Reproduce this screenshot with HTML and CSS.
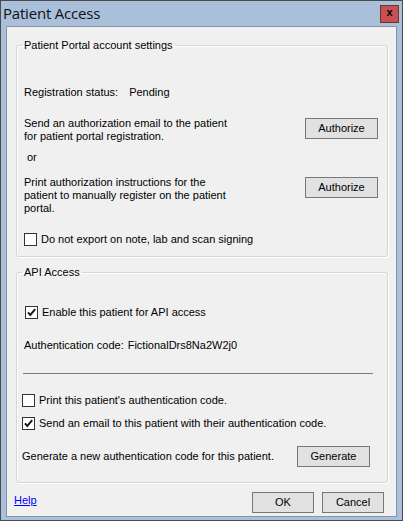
FILE: index.html
```html
<!DOCTYPE html>
<html>
<head>
<meta charset="utf-8">
<link rel="stylesheet" href="styles.css">
</head>
<body>
<div class="window">
  <div class="titlebar">
    <span class="title">Patient Access</span>
    <span class="close">x</span>
  </div>
  <div class="client">
    <fieldset class="group portal">
      <legend>Patient Portal account settings</legend>
      <div class="group-body portal-body">
        <div class="status"><span>Registration status:</span><span class="status-value">Pending</span></div>
        <div class="action-row first">
          <p class="action-text">Send an authorization email to the patient<br>for patient portal registration.</p>
          <button class="btn">Authorize</button>
        </div>
        <div class="or">or</div>
        <div class="action-row second">
          <p class="action-text">Print authorization instructions for the<br>patient to manually register on the patient<br>portal.</p>
          <button class="btn">Authorize</button>
        </div>
        <div class="check export"><span class="box"></span><span>Do not export on note, lab and scan signing</span></div>
      </div>
    </fieldset>
    <fieldset class="group api">
      <legend>API Access</legend>
      <div class="group-body api-body">
        <div class="check enable"><span class="box"><svg viewBox="0 0 11 11" width="11" height="11"><path d="M2 5.3 L4.3 8 L9.2 2.2" fill="none" stroke="#1b1b1b" stroke-width="2"/></svg></span><span>Enable this patient for API access</span></div>
        <div class="auth-code"><span>Authentication code:</span><span class="code-value">FictionalDrs8Na2W2j0</span></div>
        <div class="divider"></div>
        <div class="check print"><span class="box"></span><span>Print this patient's authentication code.</span></div>
        <div class="check email"><span class="box"><svg viewBox="0 0 11 11" width="11" height="11"><path d="M2 5.3 L4.3 8 L9.2 2.2" fill="none" stroke="#1b1b1b" stroke-width="2"/></svg></span><span>Send an email to this patient with their authentication code.</span></div>
        <div class="generate-row">
          <span class="generate-text">Generate a new authentication code for this patient.</span>
          <button class="btn">Generate</button>
        </div>
      </div>
    </fieldset>
    <div class="footer">
      <a class="help" href="#">Help</a>
      <button class="btn small">OK</button>
      <button class="btn small cancel">Cancel</button>
    </div>
  </div>
</div>
</body>
</html>
```
FILE: styles.css
```css
* { box-sizing: border-box; }
html, body { margin: 0; padding: 0; background: #f0f0f0; }
body {
  font-family: "Liberation Sans", Arial, sans-serif;
  font-size: 11px;
  line-height: 13px;
  color: #000;
}
.window {
  width: 403px;
  height: 521px;
  border: 1px solid #4b4b4b;
  background: #a9bfda;
  padding: 0 5px 3px;
  display: flex;
  flex-direction: column;
}
.titlebar {
  height: 25px;
  margin: 0 -5px;
  padding-left: 2px;
  display: flex;
  align-items: flex-start;
}
.title {
  font-family: "Open Sans", "Liberation Sans", sans-serif;
  font-size: 15px;
  line-height: 20px;
  letter-spacing: -0.2px;
  margin-top: 2px;
  color: #111;
}
.close {
  margin-left: auto;
  margin-top: 4px;
  margin-right: 3px;
  width: 19px;
  height: 18px;
  background: #c75050;
  border: 1px solid #6b3434;
  font-weight: bold;
  font-size: 11px;
  line-height: 13px;
  text-align: center;
  color: #000;
}
.client {
  flex: 1;
  background: #f0f0f0;
  border: 1px solid #8594a6;
  padding-top: 12px;
  display: flex;
  flex-direction: column;
}
.group {
  margin: 0 8px 0 9px;
  padding: 0;
  min-width: 0;
  border: 1px solid #d5d5d5;
  border-radius: 3px;
  box-shadow: inset 1px 1px 0 #fff, 1px 1px 0 #fff;
}
.group legend {
  padding: 0 2px;
  margin-left: 5px;
  line-height: 13px;
}
.api { margin-top: 9px; }
.portal-body { padding: 0 9px 10px 7px; }
.api-body { padding: 0 17px 15px 5px; }
.status { margin-top: 34px; display: flex; }
.status-value { margin-left: 11px; }
.action-row {
  display: flex;
  justify-content: space-between;
  align-items: flex-start;
}
.action-row.first { margin-top: 18px; }
.action-row.second { margin-top: 12px; }
.action-text { margin: 0; }
.btn {
  width: 73px;
  height: 21px;
  margin-top: 1px;
  padding: 0;
  border: 1px solid #777;
  background: #e1e1e1;
  font-family: "Liberation Sans", Arial, sans-serif;
  font-size: 11px;
  line-height: 17px;
  color: #000;
}
.or { margin-top: 8px; margin-left: 3px; }
.check { display: flex; align-items: flex-start; gap: 4px; }
.box {
  width: 13px;
  height: 13px;
  flex: none;
  border: 1px solid #333;
  background: #fff;
  display: flex;
}
.export { margin-top: 18px; }
.enable { margin-top: 27px; margin-left: 3px; }
.auth-code { margin-top: 20px; margin-left: 2px; display: flex; }
.code-value { margin-left: 4px; }
.divider {
  margin-top: 21px;
  margin-left: 1px;
  width: 350px;
  height: 1px;
  background: #7a7a7a;
}
.print { margin-top: 20px; }
.email { margin-top: 10px; }
.generate-row {
  margin-top: 16px;
  display: flex;
  justify-content: space-between;
  align-items: flex-start;
}
.generate-row .btn { margin-top: 0; }
.generate-text { margin-top: 4px; }
.footer {
  margin-top: 9px;
  padding: 0 12px 0 7px;
  display: flex;
  align-items: flex-start;
}
.help {
  margin-top: 2px;
  margin-right: auto;
  color: #0000ff;
  text-decoration: underline;
}
.btn.small { width: 62px; margin-top: 0; }
.btn.cancel { margin-left: 8px; }
```
